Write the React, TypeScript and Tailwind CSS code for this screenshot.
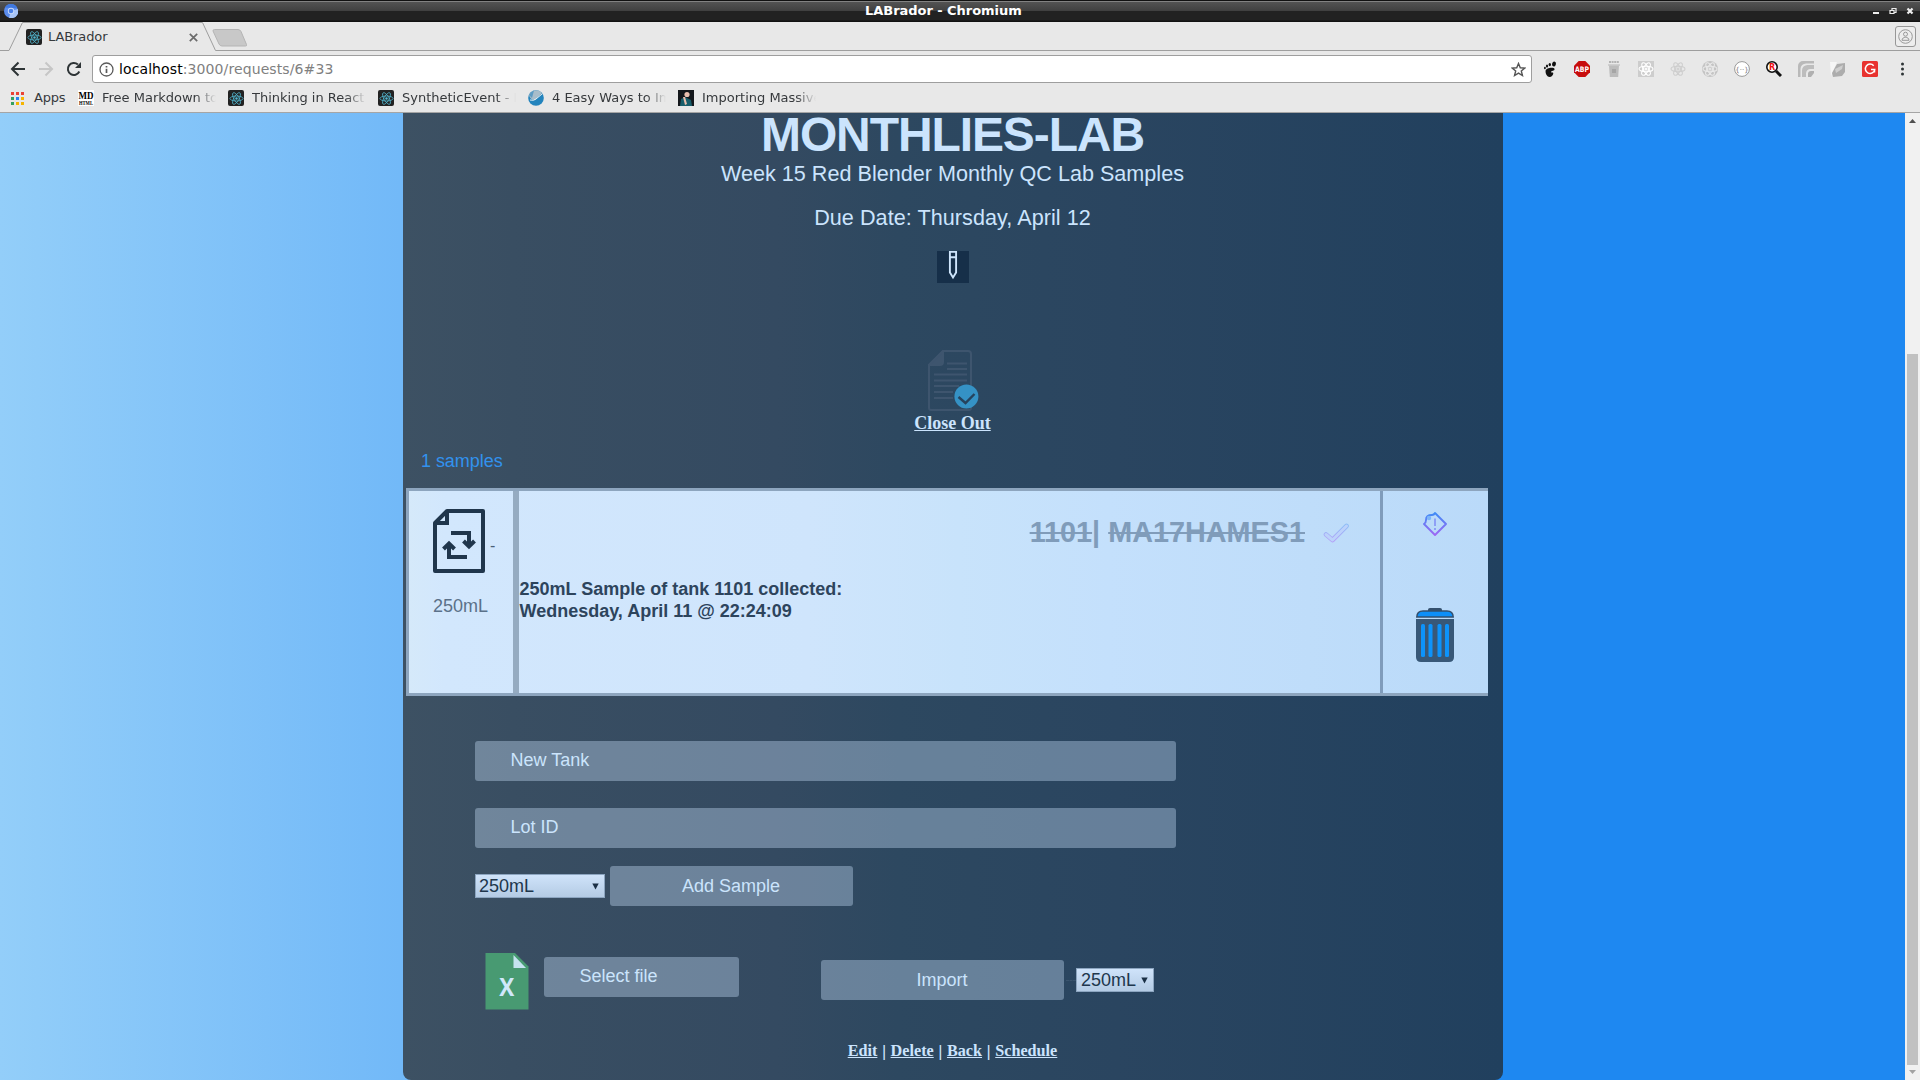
import type { ReactNode } from 'react';

function Atom({ size, stroke, width = 1, dot = 1.6, className = '' }: { size: number; stroke: string; width?: number; dot?: number; className?: string }) {
  return (
    <svg width={size} height={size} viewBox="0 0 16 16" fill="none" stroke={stroke} strokeWidth={width} className={className}>
      <ellipse cx="8" cy="8" rx="7" ry="2.7" />
      <ellipse cx="8" cy="8" rx="7" ry="2.7" transform="rotate(60 8 8)" />
      <ellipse cx="8" cy="8" rx="7" ry="2.7" transform="rotate(120 8 8)" />
      <circle cx="8" cy="8" r={dot} fill={stroke} stroke="none" />
    </svg>
  );
}

function ReactTile() {
  return (
    <span className="flex h-4 w-4 shrink-0 items-center justify-center rounded-[2px] bg-[#222222]">
      <Atom size={15} stroke="#53b9d3" width={0.8} dot={1.3} />
    </span>
  );
}

function TitleBar() {
  return (
    <div className="flex h-[22px] items-start bg-[linear-gradient(#111_0_1px,#828282_1px_2px,#535353_2px,#404040_11px,#222_11px,#222_20px,#111_21px)]">
      <svg width="14" height="14" viewBox="0 0 14 14" className="mt-1 ml-1">
        <circle cx="7" cy="7" r="7" fill="#5b8def" />
        <path d="M7 7 14 5A7 7 0 0 1 5 13.700Z" fill="#a7c5f8" />
        <path d="M1 3.400A7 7 0 0 1 13.200 4L7 4Z" fill="#3f78e0" />
        <circle cx="7" cy="7" r="3.200" fill="#c9dbfb" />
        <circle cx="7" cy="7" r="2.300" fill="#4a80e8" />
      </svg>
      <div className="mt-[3px] ml-[847px] text-[13px] leading-4 font-bold tracking-[-0.04px] whitespace-pre text-white">LABrador - Chromium</div>
      <svg width="44" height="9" viewBox="0 0 44 9" className="mt-[7px] mr-[5px] ml-auto" fill="none" stroke="#eee">
        <path d="M2 6h6" strokeWidth="2" />
        <path d="M19 3.500h4v3h-4zM21 3V1.500h4v4h-2" strokeWidth="1.200" />
        <path d="m36.500 1.500 5 5m0-5-5 5" strokeWidth="2.200" />
      </svg>
    </div>
  );
}

function TabStrip() {
  return (
    <div className="relative flex h-[29px] items-center bg-[#e8e8e8]">
      <svg width="1920" height="29" viewBox="0 0 1920 29" className="absolute inset-0">
        <path d="M0 28.500H9L22.500.500H202.500L215.500 28.500H1920" fill="none" stroke="#9e9e9e" />
        <path d="M214.500 7.500H238Q240 7.500 241 9.500L246.500 22.500Q247 24 245.500 24H222Q220 24 219 22L213 9Q212.800 7.500 214.500 7.500Z" fill="#c8c8c8" stroke="#b4b4b4" />
      </svg>
      <div className="relative flex w-[172px] items-center pt-px pl-[26px]">
        <ReactTile />
        <span className="ml-[6px] text-[13px] leading-4 tracking-[-0.1px] text-[#36393c]">LABrador</span>
      </div>
      <svg width="9" height="9" viewBox="0 0 9 9" className="relative mt-px ml-[16.5px]" stroke="#6b6b6b" strokeWidth="1.700">
        <path d="m.8.800 7.400 7.400m0-7.400L.8 8.200" />
      </svg>
      <div className="relative mr-1 ml-auto flex h-[21px] w-[21px] items-center justify-center rounded-[3px] border border-[#979797] bg-[#ededed]">
        <svg width="15" height="15" viewBox="0 0 15 15" fill="none" stroke="#999">
          <circle cx="7.500" cy="7.500" r="6.800" />
          <circle cx="7.500" cy="5.200" r="2" />
          <path d="M4 11.300c0-4 7-4 7 0Z" />
        </svg>
      </div>
    </div>
  );
}

function Ext({ children }: { children: ReactNode }) {
  return (
    <svg width="16" height="16" viewBox="0 0 16 16" className="mr-4 shrink-0">
      {children}
    </svg>
  );
}

function Petals({ stroke, width }: { stroke: string; width: number }) {
  return (
    <g fill="none" stroke={stroke} strokeWidth={width}>
      <ellipse cx="8" cy="8" rx="7" ry="2.700" />
      <ellipse cx="8" cy="8" rx="7" ry="2.700" transform="rotate(60 8 8)" />
      <ellipse cx="8" cy="8" rx="7" ry="2.700" transform="rotate(120 8 8)" />
      <circle cx="8" cy="8" r="1" />
    </g>
  );
}

function Toolbar() {
  return (
    <div className="flex h-[36px] items-center overflow-hidden bg-[#e8e8e8]">
      <svg width="92" height="28" viewBox="0 0 92 28" fill="none" strokeWidth="2" className="shrink-0">
        <path d="M25 14H12.500M18.500 7.500 12 14l6.500 6.500" stroke="#2e3436" />
        <path d="M39 14h12.500M45.500 7.500 52 14l-6.500 6.500" stroke="#c6c6c6" />
        <path d="M79.300 16.500a6 6 0 1 1-1.400-7" stroke="#2e3436" />
        <path d="M81 7v6h-6z" fill="#2e3436" />
      </svg>
      <div className="flex h-[28px] w-[1440px] shrink-0 items-center rounded-[3px] border border-[#9e9e9e] bg-white">
        <svg width="15" height="15" viewBox="0 0 15 15" className="ml-[6px]" fill="none" stroke="#5a5a5a" strokeWidth="1.300">
          <circle cx="7.500" cy="7.500" r="6.500" />
          <path d="M7.500 6.700v4.300M7.500 4v1.500" strokeWidth="1.700" />
        </svg>
        <span className="ml-[5px] text-[14px] leading-[18px] tracking-[0.1px] text-[#808080]">
          <span className="text-black">localhost</span>:3000/requests/6#33
        </span>
        <svg width="15" height="15" viewBox="0 0 16 16" className="mr-[5px] ml-auto" fill="none" stroke="#555" strokeWidth="1.500">
          <path d="m8 1.600 1.900 4.500 4.800.4-3.700 3.100 1.200 4.800L8 11.800l-4.200 2.600L5 9.600 1.300 6.500l4.800-.4Z" />
        </svg>
      </div>
      <div className="ml-[10px] flex w-[378px] shrink-0 items-center">
        <Ext>
          <g fill="#111">
            <ellipse cx="12" cy="3" rx="1.900" ry="2.500" transform="rotate(20 12 3)" />
            <ellipse cx="7.800" cy="3.600" rx="1.200" ry="1.700" />
            <ellipse cx="5" cy="5" rx="1.100" ry="1.500" />
            <ellipse cx="2.900" cy="7" rx=".9" ry="1.300" />
            <path d="M3.600 9.500C4 6.500 12.500 5.600 12.600 8.200c0 1.700-3.600 1.400-3.500 2.700s2.200-.3 2.200 1.300S9.700 16 7.500 16s-4.300-3-3.900-6.500Z" />
          </g>
        </Ext>
        <Ext>
          <path d="M4.700 0h6.600L16 4.700v6.600L11.300 16H4.700L0 11.300V4.700Z" fill="#c70d0d" />
          <text x="8" y="11" textAnchor="middle" fontSize="7.500" fontWeight="700" textLength="14" lengthAdjust="spacingAndGlyphs" fill="#fff">ABP</text>
        </Ext>
        <Ext>
          <path d="M3 4h10l-.8 12H3.800Z" fill="#bcbcbc" />
          <path d="M2 4h12" stroke="#c9c9c9" strokeWidth="1.600" />
          <path d="M3 1h10" stroke="#a2a2a2" strokeWidth="1.600" strokeDasharray="2 .6" />
          <path d="M6 8h4v4H6z" fill="#a6a6a6" />
        </Ext>
        <Ext>
          <rect width="16" height="16" fill="#cdcdcd" />
          <Petals stroke="#fff" width={1.1} />
        </Ext>
        <Ext>
          <Petals stroke="#cecece" width={1.1} />
        </Ext>
        <Ext>
          <circle cx="8" cy="8" r="8" fill="#c4c4c4" />
          <Petals stroke="#e9e9e9" width={1.1} />
        </Ext>
        <Ext>
          <circle cx="8" cy="8" r="7.400" fill="#fff" stroke="#999" />
          <text x="8" y="10.500" textAnchor="middle" fontSize="7" fill="#777">{'{··}'}</text>
        </Ext>
        <Ext>
          <path d="m10 10 5 5" stroke="#111" strokeWidth="3" />
          <circle cx="6" cy="6" r="5.200" fill="#fff" stroke="#111" strokeWidth="1.600" />
          <text x="6" y="9" textAnchor="middle" fontSize="8" fontWeight="700" fill="#e11">R</text>
        </Ext>
        <Ext>
          <path d="M0 16V5a5 5 0 0 1 5-5h11v2.500H8A5.500 5.500 0 0 0 2.500 8v8Z" fill="#b9b9b9" />
          <path d="M4 16V9.500A5.500 5.500 0 0 1 9.500 4H16v4h-3.500A4.500 4.500 0 0 0 8 12.500V16Z" fill="#bdbdbd" />
          <path d="M10 16v-3a3 3 0 0 1 3-3h3v2l-3 4Z" fill="#b0b0b0" />
        </Ext>
        <Ext>
          <path d="M0 1h7L1 15Z" fill="#f6f6f6" />
          <path d="M7 3 15 2v9l-3 4-9 1-1-4Z" fill="#adadad" />
          <path d="m5 8 8-4-1 4-6 4Z" fill="#cfcfcf" />
        </Ext>
        <Ext>
          <rect width="16" height="16" rx="1.500" fill="#e8322f" />
          <path d="M11.700 4.800A4.700 4.700 0 1 0 12.700 8.600H9m3.600-.1-.1 3" fill="none" stroke="#fff" strokeWidth="1.500" />
        </Ext>
        <Ext>
          <g fill="#2e3436">
            <circle cx="8.500" cy="3" r="1.500" />
            <circle cx="8.500" cy="8" r="1.500" />
            <circle cx="8.500" cy="13" r="1.500" />
          </g>
        </Ext>
      </div>
    </div>
  );
}

function Bookmark({ icon, label }: { icon: ReactNode; label: string }) {
  return (
    <div className="flex w-[150px] shrink-0 items-center">
      {icon}
      <span className="ml-2 w-[115px] overflow-hidden [mask-image:linear-gradient(90deg,#000_94px,transparent_114px)] text-[13px] leading-4 whitespace-nowrap text-[#36393c]">
        {label}
      </span>
    </div>
  );
}

const appDots = ['#ea4335', '#ea4335', '#ea4335', '#34a060', '#2a84f0', '#f5b400', '#34a060', '#f5b400', '#f5b400'];

function BookmarksBar() {
  return (
    <div className="flex h-[26px] border-b border-[#a5a5a5] bg-[#e8e8e8] pt-px pb-[4px] pl-[11px]">
      <div className="flex w-[67px] items-center">
        <span className="grid grid-cols-3 gap-[2px]">
          {appDots.map((c, i) => (
            <span key={i} className="h-[3px] w-[3px]" style={{ background: c }} />
          ))}
        </span>
        <span className="ml-[10px] text-[13px] leading-4 tracking-[-0.2px] text-[#36393c]">Apps</span>
      </div>
      <Bookmark
        label="Free Markdown to HTML"
        icon={
          <svg width="16" height="16" viewBox="0 0 16 16" className="bg-white" fontFamily="Liberation Serif" fontWeight="700">
            <text x="8" y="8.500" fontSize="10" textAnchor="middle" textLength="15" lengthAdjust="spacingAndGlyphs">MD</text>
            <text x="8" y="15" fontSize="5.500" textAnchor="middle" textLength="14" lengthAdjust="spacingAndGlyphs">HTML</text>
          </svg>
        }
      />
      <Bookmark label="Thinking in React" icon={<ReactTile />} />
      <Bookmark label="SyntheticEvent - React" icon={<ReactTile />} />
      <Bookmark
        label="4 Easy Ways to Import"
        icon={
          <svg width="16" height="16" viewBox="0 0 16 16">
            <circle cx="8" cy="8" r="7.800" fill="#2384bd" />
            <path d="M1 5a7.800 7.800 0 0 1 13-2L7 10Q2 10 1 5Z" fill="#a8bdca" />
            <path d="M1 5a7.800 7.800 0 0 1 5-4.500L4 8Z" fill="#5d9cc4" />
            <path d="M2 10q4 1 6-1l6-5" stroke="#e6f0f5" fill="none" />
          </svg>
        }
      />
      <Bookmark
        label="Importing Massive"
        icon={
          <svg width="16" height="16" viewBox="0 0 16 16">
            <rect width="16" height="16" fill="#14171b" />
            <path d="M2 16 3 9l4-2 6 3 1 6Z" fill="#175d6b" />
            <circle cx="9" cy="4.500" r="2.600" fill="#eabfae" />
            <path d="m5 7 2 8 2-1-2-7Z" fill="#eabfae" />
          </svg>
        }
      />
    </div>
  );
}

function PencilIcon() {
  return (
    <svg width="32" height="32" viewBox="0 0 32 32" className="ml-px bg-[#162f49]" fill="none" stroke="#cfe6fd" strokeWidth="1.900">
      <path d="M12.900.900h6.200v20.600L16 26.500l-3.100-5ZM13 6.200h6" />
    </svg>
  );
}

function CloseOutIcon() {
  return (
    <svg width="52" height="62" viewBox="0 0 52 62" className="ml-[2px]" fill="none" stroke="#3e556e" strokeWidth="2">
      <path d="M15 1h25q3 0 3 3v54q0 2-2 2H3q-2 0-2-2V15Z" />
      <path d="M15 1v11q0 3-3 3H1Z" fill="#3e556e" />
      <path d="M19 13.500h20M19 19h20M6 24.500h33M6 30.500h33M6 36h25M6 42h19M6 48h19" />
      <circle cx="38.400" cy="46.500" r="12" fill="#3592c5" stroke="none" />
      <path d="m30.500 47 7 6 9-9" stroke="#26435d" strokeWidth="2.400" />
    </svg>
  );
}

function SwapFileIcon() {
  return (
    <svg width="52" height="64" viewBox="0 0 52 64" fill="none" stroke="#20364c" strokeWidth="4">
      <path d="M14 2h36v60H2V14Z" strokeLinejoin="round" />
      <path d="M14 2v12H2" />
      <path d="M18 24h18v12" />
      <path d="m30.500 32 5.500 5.500 5.500-5.500" />
      <path d="M34 48H16V36" />
      <path d="m10.500 40 5.500-5.500 5.500 5.500" />
    </svg>
  );
}

function CheckIcon() {
  return (
    <svg width="26" height="20" viewBox="0 0 26 20" className="mt-px ml-[18px]">
      <defs>
        <linearGradient id="check" x1="0" y1="0" x2="0" y2="1">
          <stop stopColor="#8dbdf6" />
          <stop offset="1" stopColor="#b29ff6" />
        </linearGradient>
      </defs>
      <path d="m3 11.500 6.500 5.500L23.500 3" fill="none" stroke="url(#check)" strokeWidth="4.600" strokeLinecap="round" strokeLinejoin="round" />
      <path d="m3 11.500 6.500 5.500L23.500 3" fill="none" stroke="#bcd2fb" strokeWidth="3" strokeLinecap="round" strokeLinejoin="round" />
    </svg>
  );
}

function AlertTagIcon() {
  return (
    <svg width="24" height="24" viewBox="0 0 24 24" fill="none">
      <defs>
        <linearGradient id="alert" x1="0" y1="0" x2="0" y2="24" gradientUnits="userSpaceOnUse">
          <stop stopColor="#3a8cf6" />
          <stop offset="1" stopColor="#a266f3" />
        </linearGradient>
      </defs>
      <path d="M9 3q2 0 3-2l11 11-11 11L1 12q2-1 2-4 0-5 6-5Z" stroke="url(#alert)" strokeWidth="1.900" strokeLinejoin="round" />
      <circle cx="6" cy="6" r="2.200" fill="#7db6f8" />
      <path d="M12 6.500v7.500m0 2v2" stroke="#8a9af5" strokeWidth="1.800" />
    </svg>
  );
}

function TrashIcon() {
  return (
    <svg width="38" height="55" viewBox="0 0 38 55">
      <path d="M12 3V1.500Q12 0 14 0h10q2 0 2 1.500V3Z" fill="#34506e" />
      <path d="M.8 9Q1 3 7 3h24q6 0 6.200 6Z" fill="#0d8ff9" stroke="#34506e" strokeWidth="1.500" />
      <path d="M0 11h38v38q0 5-5 5H5q-5 0-5-5Z" fill="#385878" />
      <g fill="#0d93fb">
        <rect x="5" y="16" width="4" height="33" rx="1.500" />
        <rect x="12.500" y="16" width="4" height="33" rx="1.500" />
        <rect x="21.500" y="16" width="4" height="33" rx="1.500" />
        <rect x="29" y="16" width="4" height="33" rx="1.500" />
      </g>
    </svg>
  );
}

function ExcelIcon() {
  return (
    <svg width="44" height="57" viewBox="0 0 44 57" className="ml-[10px] -mt-1">
      <path d="M.5 0h29.500l13.500 13.500V56.500H.5Z" fill="#489a72" />
      <path d="M28.500 2v13h12.500Z" fill="#c5e3f0" />
      <text x="21.700" y="43" textAnchor="middle" fontFamily="Open Sans" fontWeight="700" fontSize="24.500" textLength="15" lengthAdjust="spacingAndGlyphs" fill="#d0e8fb">X</text>
    </svg>
  );
}

function SampleCard() {
  return (
    <div className="mt-[17px] ml-[3px] flex h-[208px] w-[1082px] border-y-3 border-l-3 border-[#8da5be] bg-[linear-gradient(90deg,#d5e9fa,#d2e7fd_36px,#cfe5fc_400px,#c8e3fb_550px,#c4e0fc_700px,#bfddfa_900px,#badaf9)] bg-origin-padding">
      <div className="flex w-[110px] flex-col border-r-6 border-[#95abc1] pt-[18px] pl-6">
        <div className="flex h-16">
          <SwapFileIcon />
          <span className="mt-[27px] ml-[5px] text-[16px] leading-5 text-[#4a6078]">-</span>
        </div>
        <span className="mt-[23px] text-[18px] leading-5 text-[#5b7189]">250mL</span>
      </div>
      <div className="flex-1 text-[#2d445c]">
        <div className="mt-[23px] flex h-[36px] items-center justify-end pr-[31px] text-[28.8px] leading-8 font-bold text-[#809cba]">
          <span className="whitespace-pre">
            <s>1101</s>| <s>MA17HAMES1</s>
          </span>
          <CheckIcon />
        </div>
        <div className="mt-[28px] pl-[0.5px] text-[18px] leading-[22px] font-bold">
          250mL Sample of tank 1101 collected:
          <br />
          Wednesday, April 11 @ 22:24:09
        </div>
      </div>
      <div className="flex w-[108px] flex-col items-center border-l-3 border-[#809cbb] pt-[21px] pr-[2px]">
        <AlertTagIcon />
        <div className="mt-[71.5px]">
          <TrashIcon />
        </div>
      </div>
    </div>
  );
}

function Field({ label, className }: { label: string; className: string }) {
  return (
    <div className={`h-10 rounded-[3px] bg-[rgba(200,224,250,0.38)] pt-[9px] pl-[35.5px] text-[18px] leading-5 text-[#cbe4fc] ${className}`}>{label}</div>
  );
}

function Button({ label, className }: { label: string; className: string }) {
  return (
    <button className={`h-10 w-[243px] rounded-[3px] bg-[rgba(200,224,250,0.38)] pr-px text-[18px] leading-5 text-[#cbe4fc] ${className}`}>{label}</button>
  );
}

function Select({ className }: { className: string }) {
  return (
    <div className={`flex h-6 items-center border border-[#8ca5c0] bg-[linear-gradient(#cfe3fa,#b4cbe4)] text-[18px] leading-5 text-[#20364c] ${className}`}>
      250mL
      <svg width="7" height="7" viewBox="0 0 7 7" className="mr-[5px] ml-auto">
        <path d="M.3.500h6.400L3.500 6.500Z" fill="#1a2f45" />
      </svg>
    </div>
  );
}

function Panel() {
  return (
    <main className="flex h-[967px] w-[1100px] flex-col overflow-hidden rounded-b-[8px] bg-[linear-gradient(90deg,#3d5163,#394e62_10%,#344a61_34%,#2d4860_45%,#2a4560_65%,#21405e)] text-[#cbe4fd]">
      <header className="flex flex-col items-center pr-px">
        <h1 className="-mt-[2px] text-[48px] leading-[48px] font-bold tracking-[-1.1px]">MONTHLIES-LAB</h1>
        <p className="mt-[3px] text-[21.6px] leading-6">Week 15 Red Blender Monthly QC Lab Samples</p>
        <p className="mt-5 mb-[21px] text-[21.6px] leading-6 tracking-[0.05px]">Due Date: Thursday, April 12</p>
        <PencilIcon />
        <div className="mt-[67px]">
          <CloseOutIcon />
        </div>
        <a className="mt-px font-['Liberation_Serif',serif] text-[18px] leading-5 font-bold underline">Close Out</a>
      </header>
      <div className="mt-[18px] pl-[18px] text-[18px] leading-5 tracking-[-0.05px] text-[#3292ee]">1 samples</div>
      <SampleCard />
      <form className="ml-[72px]">
        <Field label="New Tank" className="mt-[45px] w-[701px]" />
        <Field label="Lot ID" className="mt-[27px] w-[701px]" />
        <div className="mt-[18px] flex items-center">
          <Select className="w-[130px] pl-[3px]" />
          <Button label="Add Sample" className="ml-[5px]" />
        </div>
        <div className="mt-[51px] flex h-[52px] items-start">
          <ExcelIcon />
          <Field label="Select file" className="ml-[15px] w-[195px]" />
          <Button label="Import" className="mt-[3px] ml-[82px]" />
          <span className="mt-[23px] ml-[2px] w-[10px] border-t border-dashed border-[#3a546e]" />
          <Select className="mt-[11px] w-[78px] pl-[4px]" />
        </div>
      </form>
      <nav className="mt-[33px] flex justify-center pr-px font-['Liberation_Serif',serif] text-[16.2px] leading-[18px] font-bold">
        <u>Edit</u>
        <span className="font-['Liberation_Sans',sans-serif] font-normal whitespace-pre"> | </span>
        <u>Delete</u>
        <span className="font-['Liberation_Sans',sans-serif] font-normal whitespace-pre"> | </span>
        <u>Back</u>
        <span className="font-['Liberation_Sans',sans-serif] font-normal whitespace-pre"> | </span>
        <u>Schedule</u>
      </nav>
    </main>
  );
}

export default function App() {
  return (
    <div className="flex h-[1080px] w-[1920px] flex-col overflow-hidden bg-[#e8e8e8]">
      <div className="shrink-0 font-['DejaVu_Sans',sans-serif]">
        <TitleBar />
        <TabStrip />
        <Toolbar />
        <BookmarksBar />
      </div>
      <div className="flex h-[967px] font-['Liberation_Sans',sans-serif]">
        <div className="w-[1905px] bg-[linear-gradient(90deg,#93cef9,#72b9f8_400px,#1e88f1_1500px)] pl-[403px]">
          <Panel />
        </div>
        <div className="flex w-[15px] flex-col items-center bg-[#f1f1f1]">
          <svg width="15" height="15" viewBox="0 0 15 15">
            <path d="M4 10h7L7.500 6Z" fill="#505050" />
          </svg>
          <div className="mt-[226px] h-[711px] w-[11px] bg-[#c1c1c1]" />
          <svg width="15" height="15" viewBox="0 0 15 15">
            <path d="M4 5h7L7.500 9Z" fill="#a3a3a3" />
          </svg>
        </div>
      </div>
    </div>
  );
}
